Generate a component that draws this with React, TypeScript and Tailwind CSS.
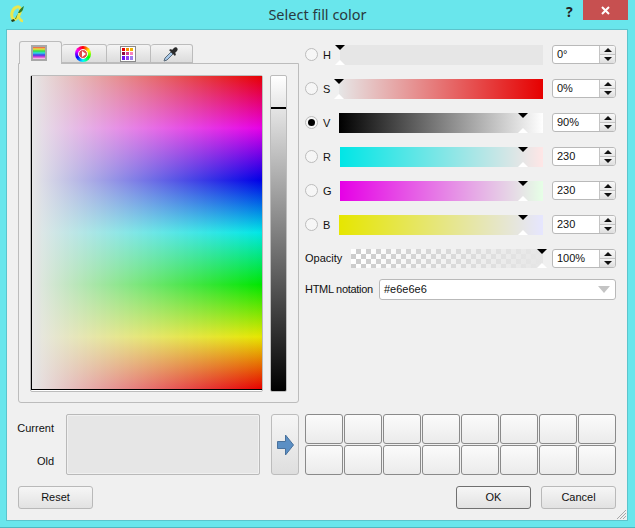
const sliders = [
  { key: "H", bar: "bg-[#e6e6e6]", value: "0°", pos: 1, left: "ml-[1px]" },
  { key: "S", bar: "bg-[linear-gradient(to_right,#e6e6e6,#e60000)]", value: "0%", pos: 0, left: "" },
  { key: "V", bar: "bg-[linear-gradient(to_right,#000000,#ffffff)]", value: "90%", pos: 184, left: "", checked: true },
  { key: "R", bar: "bg-[linear-gradient(to_right,#00e6e6,#ffe6e6)]", value: "230", pos: 184, left: "ml-[1px]" },
  { key: "G", bar: "bg-[linear-gradient(to_right,#e600e6,#e6ffe6)]", value: "230", pos: 184, left: "ml-[1px]" },
  { key: "B", bar: "bg-[linear-gradient(to_right,#e6e600,#e6e6ff)]", value: "230", pos: 184, left: "" },
];

function Marker({ pos }: { pos: number }) {
  return (
    <>
      <div
        className="absolute top-0 h-0 w-0 border-x-[5px] border-t-[5px] border-x-transparent border-t-black"
        style={{ left: pos - 5 }}
      />
      <div
        className="absolute bottom-0 h-0 w-0 border-x-[5px] border-b-[5px] border-x-transparent border-b-white"
        style={{ left: pos - 5 }}
      />
    </>
  );
}

function Spin({ value }: { value: string }) {
  return (
    <div className="flex h-[19px] w-[64px] overflow-hidden rounded-[3px] border border-[#b9b9b9] bg-white">
      <div className="flex flex-1 items-center pl-[4px] text-[11px] text-[#111]">{value}</div>
      <div className="flex w-[16px] flex-col border-l border-[#c4c4c4]">
        <div className="flex flex-1 items-center justify-center bg-[linear-gradient(#f8f8f8,#e8e8e8)]">
          <div className="h-0 w-0 border-x-[4px] border-b-[4px] border-x-transparent border-b-[#111]" />
        </div>
        <div className="flex flex-1 items-center justify-center border-t border-[#c4c4c4] bg-[linear-gradient(#f4f4f4,#dedede)]">
          <div className="h-0 w-0 border-x-[4px] border-t-[4px] border-x-transparent border-t-[#111]" />
        </div>
      </div>
    </div>
  );
}

function Radio({ checked }: { checked?: boolean }) {
  return (
    <div className="flex h-[13px] w-[13px] items-center justify-center rounded-full border border-[#bcbcbc] bg-[#f6f6f6]">
      {checked && <div className="h-[7px] w-[7px] rounded-full bg-black" />}
    </div>
  );
}

function Button({ label, dark }: { label: string; dark?: boolean }) {
  return (
    <div
      className={`flex h-[23px] w-[75px] items-center justify-center rounded-[3px] border bg-[linear-gradient(#f6f6f6,#e2e2e2)] text-[11px] text-[#111] ${
        dark ? "border-[#707070]" : "border-[#b9b9b9]"
      }`}
    >
      {label}
    </div>
  );
}

function Logo() {
  return (
    <svg width="16" height="18" viewBox="0 0 16 18">
      <path d="M7 2C3 3 1 8 2 12c1 3 3 3 5 1 3-3 4-8 3-10-.5-1-2-1.500-3-1z" fill="none" stroke="#e8e850" strokeWidth="3" />
      <path d="M8 10c1 3 2 6 5 6" fill="none" stroke="#e8e850" strokeWidth="2.500" />
      <path d="M5 14L9 6c1-2 3-4 5-5-1 3-1 5-3 6-1 1-2 1-3 1l-2 6z" fill="#2f7f2a" />
      <path d="M1 15l3-1 1 2-3 1z" fill="#24401a" />
    </svg>
  );
}

function BoxIcon() {
  return (
    <div className="h-[16px] w-[16px] border-2 border-[#a8a8a8] bg-[linear-gradient(#e85050,#f0e040,#30e040,#30d8e8,#4040e8,#e040d0,#f8e0f0)]" />
  );
}

function WheelIcon() {
  return (
    <div className="relative h-[16px] w-[16px] rounded-full bg-[conic-gradient(#ff0000,#ffff00,#00ff00,#00ffff,#0000ff,#ff00ff,#ff0000)]">
      <div className="absolute inset-[3px] flex items-center justify-center rounded-full border border-white bg-[#e34a4a]">
        <div className="ml-[1px] h-0 w-0 border-y-[3px] border-l-[4px] border-y-transparent border-l-white" />
      </div>
    </div>
  );
}

function GridIcon() {
  const cells = ["#e80000", "#f09000", "#f0b000", "#8c0a3c", "#d83c8c", "#f880c0", "#6a10f0", "#9040f0", "#a080f0"];
  return (
    <div className="grid h-[16px] w-[16px] grid-cols-3 gap-[1px] border border-[#8a8a8a] bg-white p-[1px]">
      {cells.map((c, i) => (
        <div key={i} style={{ backgroundColor: c }} />
      ))}
    </div>
  );
}

function DropperIcon() {
  return (
    <svg width="16" height="16" viewBox="0 0 16 16">
      <path d="M1 15l1-3 6-6 2 2-6 6z" fill="#a8c8e8" stroke="#5a6a78" strokeWidth="1" />
      <path d="M6 4l6 6 1-2-1-1 2-2c2-2-1-5-3-3l-2 2-1-1z" fill="#2a2a2a" />
    </svg>
  );
}

export default function App() {
  return (
    <div className="flex h-[528px] w-[635px] flex-col overflow-hidden border-b border-[#4fb8c0] bg-[#69e6ec] font-['Liberation_Sans',Arial,sans-serif]">
      {/* 타이틀바 */}
      <div className="relative flex h-[29px] shrink-0 items-center justify-center">
        <div className="absolute left-[10px] top-[5px]">
          <Logo />
        </div>
        <span className="font-['Noto_Sans',sans-serif] text-[14.5px] text-[#2a3a40]">Select fill color</span>
        <span className="absolute left-[566px] top-[1px] font-['Noto_Sans',sans-serif] text-[14px] font-bold text-[#222]">?</span>
        <div className="absolute left-[583px] top-0 flex h-[20px] w-[45px] items-center justify-center bg-[#c75050]">
          <svg width="9" height="9" viewBox="0 0 9 9">
            <path d="M1 1l7 7M8 1l-7 7" stroke="white" strokeWidth="2" />
          </svg>
        </div>
      </div>

      {/* 본문 */}
      <div className="relative ml-[6px] mr-[7px] flex h-[492px] flex-col border border-[#5cc4cc] bg-[#f0f0f0] px-[11px] text-[11px] text-[#111]">
        <div className="mt-[11px] flex h-[362px]">
          {/* 왼쪽 탭 */}
          <div className="flex w-[281px] flex-col">
            <div className="flex h-[23px] items-end pl-[1px]">
              <div className="z-10 -mb-[1px] flex h-[23px] w-[43px] items-start justify-start rounded-t-[3px] border border-b-0 border-[#bcbcbc] bg-[#f0f0f0] pl-[11px] pt-[3px]">
                <BoxIcon />
              </div>
              <div className="flex h-[19px] w-[45px] items-center justify-center rounded-t-[3px] border border-l-0 border-[#bcbcbc] bg-[linear-gradient(#f4f4f4,#dcdcdc)] pr-[2px]">
                <WheelIcon />
              </div>
              <div className="flex h-[19px] w-[44px] items-center justify-center rounded-t-[3px] border border-l-0 border-[#bcbcbc] bg-[linear-gradient(#f4f4f4,#dcdcdc)] pr-[2px]">
                <GridIcon />
              </div>
              <div className="flex h-[19px] w-[42px] items-center justify-center rounded-t-[3px] border border-l-0 border-[#bcbcbc] bg-[linear-gradient(#f4f4f4,#dcdcdc)] pr-[2px]">
                <DropperIcon />
              </div>
            </div>
            <div className="flex h-[340px] gap-[7px] rounded-b-[3px] border border-[#bcbcbc] p-[11px]">
              <div className="h-[317px] w-[234px] rounded-[2px] border border-[#bcbcbc] bg-white">
                <div className="h-[314px] w-full border-b border-l border-black bg-[linear-gradient(to_right,#e6e6e6,rgba(230,230,230,0)),linear-gradient(to_bottom,#e60000,#e600e6,#0000e6,#00e6e6,#00e600,#e6e600,#e60000)]" />
              </div>
              <div className="relative h-[317px] w-[17px] rounded-[2px] border border-[#bcbcbc] bg-[linear-gradient(#ffffff,#000000)]">
                <div className="absolute left-0 right-0 top-[31px] h-[2px] bg-black" />
              </div>
            </div>
          </div>

          {/* 오른쪽 슬라이더 */}
          <div className="ml-[6px] flex flex-1 flex-col pt-[4px]">
            <div className="flex flex-col gap-[14px]">
              {sliders.map((s) => (
                <div key={s.key} className="flex h-[20px] items-start">
                  <div className="mt-[3px] w-[13px]">
                    <Radio checked={s.checked} />
                  </div>
                  <div className="ml-[5px] mt-[2px] w-[16px]">{s.key}</div>
                  <div className="relative h-[20px] w-[204px]">
                    <div className={`h-full ${s.left} ${s.bar}`} />
                    <Marker pos={s.pos} />
                  </div>
                  <div className="ml-[9px]">
                    <Spin value={s.value} />
                  </div>
                </div>
              ))}
            </div>
            <div className="mt-[14px] flex h-[19px] items-center">
              <div className="w-[46px]">Opacity</div>
              <div className="relative h-[19px] w-[192px]">
                <div className="h-full bg-[linear-gradient(to_right,rgba(230,230,230,0),#e6e6e6),repeating-conic-gradient(#cccccc_0_25%,#ffffff_0_50%)] bg-[length:100%_100%,10px_10px]" />
                <Marker pos={191} />
              </div>
              <div className="ml-[9px]">
                <Spin value="100%" />
              </div>
            </div>
            <div className="mt-[11px] flex h-[21px] items-center">
              <div className="w-[74px] whitespace-nowrap tracking-[-0.3px]">HTML notation</div>
              <div className="flex h-[21px] w-[237px] items-center justify-between rounded-[3px] border border-[#b9b9b9] bg-white pl-[4px] pr-[5px]">
                <span>#e6e6e6</span>
                <div className="h-0 w-0 border-x-[6px] border-t-[7px] border-x-transparent border-t-[#c4c4c4]" />
              </div>
            </div>
          </div>
        </div>

        {/* 하단 색상 비교 + 스와치 */}
        <div className="mt-[11px] flex h-[61px]">
          <div className="flex h-full w-[36px] flex-col items-end justify-between py-[6px]">
            <span>Current</span>
            <span>Old</span>
          </div>
          <div className="ml-[12px] h-full w-[194px] rounded-[2px] border border-[#b9b9b9] bg-[#e6e6e6] shadow-[inset_0_0_0_1px_#f0f0f0]" />
          <div className="ml-[11px] flex h-full w-[28px] items-center justify-center rounded-[3px] border border-[#bcbcbc] bg-[linear-gradient(#f6f6f6,#dedede)]">
            <svg width="17" height="22" viewBox="0 0 17 22">
              <path d="M.5 7.500h8V1l8 10-8 10v-6.500h-8z" fill="#5b8fc4" stroke="#49719c" strokeWidth="1" />
            </svg>
          </div>
          <div className="ml-[6px] grid h-full w-[311px] grid-cols-8 gap-[1px]">
            {Array.from({ length: 16 }).map((_, i) => (
              <div key={i} className="rounded-[3px] border border-[#8a8a8a] bg-[linear-gradient(#fbfbfb,#ebebeb)]" />
            ))}
          </div>
        </div>

        {/* 버튼 */}
        <div className="mt-[11px] flex justify-between">
          <Button label="Reset" />
          <div className="flex gap-[10px]">
            <Button label="OK" dark />
            <Button label="Cancel" />
          </div>
        </div>

        <svg className="absolute bottom-0 right-0" width="12" height="12" viewBox="0 0 12 12">
          <path d="M11 2L2 11M11 5L5 11M11 8L8 11" stroke="#a8a8a8" strokeWidth="1" />
        </svg>
      </div>
    </div>
  );
}
